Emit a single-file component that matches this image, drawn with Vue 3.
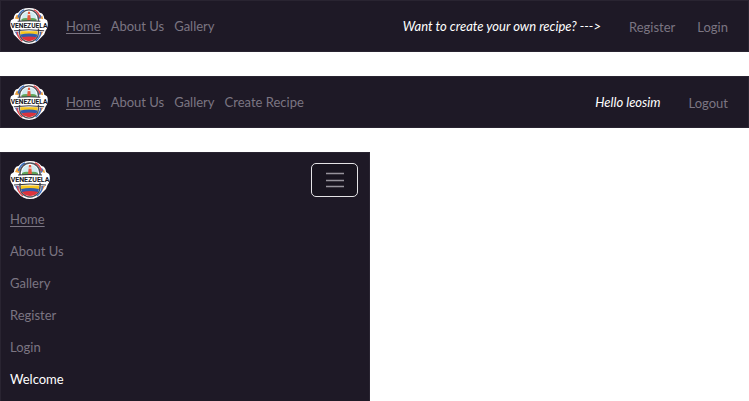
<script setup>
const navs = [
  { label: 'Guest', type: 'bar', links: ['Home', 'About Us', 'Gallery'], note: 'Want to create your own recipe? --->', actions: ['Register', 'Login'] },
  { label: 'Member', type: 'bar', links: ['Home', 'About Us', 'Gallery', 'Create Recipe'], note: 'Hello leosim', actions: ['Logout'] },
  { label: 'Menu', type: 'drawer', links: ['Home', 'About Us', 'Gallery', 'Register', 'Login'], welcome: 'Welcome' }
]
</script>

<template>
  <main class="page">
    <nav v-for="nav in navs" :key="nav.label" :class="nav.type" :aria-label="nav.label">
      <div class="head">
        <a class="brand" href="#">
          <svg class="logo" viewBox="0 0 40 38" aria-hidden="true">
            <path d="M20 0C25 0 29 1.500 31.500 5C34 5 36 8 36 11L39 13C40.500 16 40 21 37.500 24L36 28L32 32C29 36 25 38 20 38S11 36 8 32L4 28L3 24C0 21 -0.500 16 1 13L4 11C4 8 6 5 8.500 5C11 1.500 15 0 20 0Z" fill="#fff" />
            <path d="M5 11L7 7L10 8L9 12Z" fill="#f2a33a" />
            <path d="M34 10L32 7L30 8L31 12Z" fill="#3d72c9" />
            <path d="M32 11L34 8L35 12Z" fill="#f2a33a" />
            <path d="M5 25H9L8 30Z" fill="#3972c8" />
            <path d="M35 25H31L32 30Z" fill="#f08a35" />
            <path d="M8.500 10Q10 4 15 2" fill="none" stroke="#3972c8" stroke-width="1.500" />
            <path d="M25 2Q30 4 31.500 10" fill="none" stroke="#e7474b" stroke-width="1.500" />
            <path d="M7.500 25Q8 31 13 35" fill="none" stroke="#e7474b" stroke-width="1.500" />
            <path d="M27 35Q32 31 32.500 25" fill="none" stroke="#3972c8" stroke-width="1.500" />
            <rect x="10" y="2" width="20" height="34" rx="10" fill="#fff" stroke="#50525a" stroke-width="1.500" />
            <path d="M12 13V11Q13 4 20 4T28 11V13Z" fill="#cfebf1" />
            <path d="M12 12Q15 10 20 11Q25 10 28 12V14H12Z" fill="#64a65a" />
            <path d="M19 4H21L22 13H18Z" fill="#e5583e" />
            <path d="M18.500 7H21.500" stroke="#fff" stroke-width="1" />
            <path d="M11 24.500H29V28H11Z" fill="#f6c51e" />
            <path d="M11 28Q20 26 29 28L28 31H12Z" fill="#315bad" />
            <path d="M12 31Q20 29 28 31Q25 35 20 35T12 31Z" fill="#dc343d" />
            <path d="M1 14H39V22Q20 21 2 23Z" fill="#fff" />
            <path d="M4 24Q20 22 36 24M8 14Q20 13 32 14" fill="none" stroke="#30313b" stroke-width="1" />
            <text class="logo-text" x="20" y="21" text-anchor="middle">VENEZUELA</text>
          </svg>
        </a>
        <button v-if="nav.type === 'drawer'" class="toggle" type="button" aria-label="Toggle navigation">
          <svg class="lines" viewBox="0 0 20 16" aria-hidden="true"><path d="M1 1.500H19M1 8.500H19M1 14.500H19" /></svg>
        </button>
      </div>
      <div class="links">
        <a v-for="link in nav.links" :key="link" href="#" :class="{ active: link === 'Home' }">{{ link }}</a>
        <span v-if="nav.welcome" class="welcome">{{ nav.welcome }}</span>
      </div>
      <em v-if="nav.note" class="note">{{ nav.note }}</em>
      <div v-if="nav.actions" class="actions">
        <a v-for="action in nav.actions" :key="action" href="#">{{ action }}</a>
      </div>
    </nav>
  </main>
</template>

<style>
body {
  background: #fff;
}
</style>

<style scoped>
.page {
  display: flex;
  flex-direction: column;
  gap: 24px;
  font-family: Lato, sans-serif;
  font-size: 13px;
  line-height: 20px;
}
a {
  color: #7b7582;
  text-decoration: none;
}
.active {
  text-decoration: underline;
  text-underline-offset: 2px;
}
.bar,
.drawer {
  box-sizing: border-box;
  background: #1e1926;
  border: 1px solid #292431;
}
.bar {
  display: flex;
  align-items: center;
  min-height: 52px;
  padding: 0 20px 0 9px;
}
.brand,
.logo {
  display: block;
}
.logo {
  width: 38px;
  height: 36px;
}
.logo-text {
  font: 700 7px Roboto, sans-serif;
  fill: #17171d;
}
.drawer .logo {
  width: 40px;
  height: 38px;
}
.links {
  display: flex;
  gap: 10px;
}
.bar .links {
  margin-left: 18px;
}
.note {
  margin-left: auto;
  color: #fff;
}
.actions {
  display: flex;
  gap: 22px;
  margin-left: 28px;
  padding-top: 2px;
}
.drawer {
  max-width: 370px;
  padding: 8px 11px 4px 9px;
}
.head {
  display: flex;
  align-items: center;
  justify-content: space-between;
}
.toggle {
  display: grid;
  place-items: center;
  box-sizing: border-box;
  width: 47px;
  height: 34px;
  padding: 0;
  background: #18141f;
  border: 1px solid #e4e3e6;
  border-radius: 5px;
}
.lines {
  width: 20px;
  height: 16px;
  fill: none;
  stroke: #96929b;
  stroke-width: 1.4;
}
.drawer .links {
  flex-direction: column;
  align-items: flex-start;
  gap: 12px;
  padding: 10px 0;
}
.welcome {
  color: #fff;
}
</style>
